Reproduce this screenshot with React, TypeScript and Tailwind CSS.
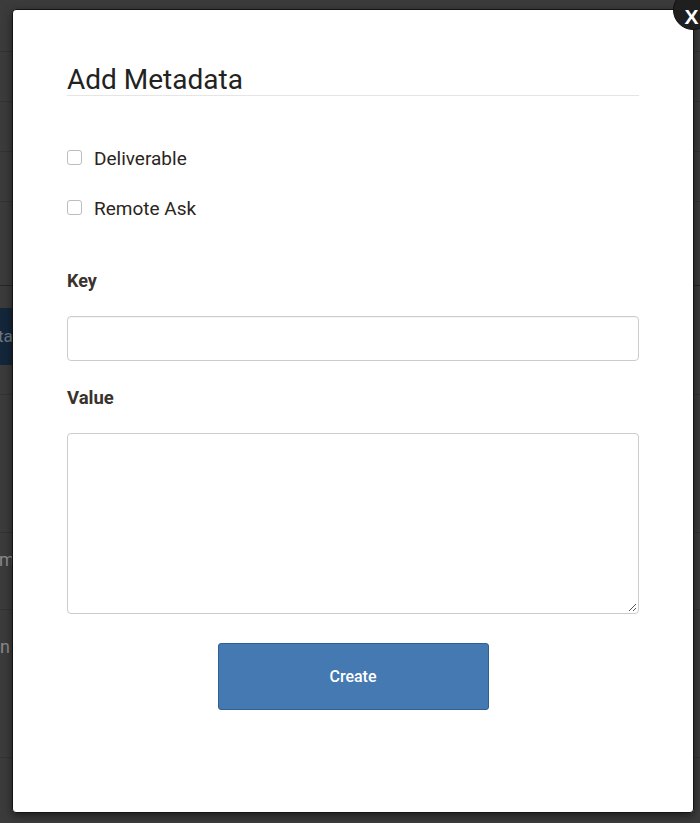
import React from "react";

const font = { fontFamily: "Roboto, 'Noto Sans', Arial, sans-serif" };

function BgRow({ h, children, dark }: { h: string; children?: React.ReactNode; dark?: boolean }) {
  return (
    <div className={`${h} border-b ${dark ? "border-[#262626]" : "border-[#333333]"} flex items-center`}>
      {children}
    </div>
  );
}

export default function App() {
  return (
    <div className="relative w-[700px] h-[823px] overflow-hidden bg-[#3b3b3b]" style={font}>
      {/* page behind the overlay */}
      <div className="flex flex-col">
        <BgRow h="h-[52px]" />
        <BgRow h="h-[50px]" />
        <BgRow h="h-[50px]" />
        <BgRow h="h-[50px]" />
        <BgRow h="h-[84px]" dark />
        <div className="h-[109px] border-b border-[#333333] pt-[22px]">
          <div className="h-[57px] w-[120px] bg-[#14263a] flex items-center text-[17px] text-[#6d7784]">
            <span className="-ml-[2px]">ta</span>
          </div>
        </div>
        <BgRow h="h-[138px]" />
        <div className="h-[77px] border-b border-[#333333] pt-[15px] text-[18px] leading-[24px] text-[#8a8a8a]">
          <span className="-ml-[1px]">m</span>
        </div>
        <div className="h-[148px] border-b border-[#333333] pt-[25px] text-[18px] leading-[24px] text-[#8a8a8a]">
          <span>n</span>
        </div>
      </div>

      {/* modal */}
      <div className="absolute left-[12px] top-[9px] w-[682px] h-[804px] bg-white rounded-[4px] border border-[#141414] shadow-[0_3px_9px_rgba(0,0,0,0.5)] px-[54px] flex flex-col">
        <h2 className="mt-[54px] text-[28px] leading-[31px] text-[#222222] border-b border-[#e5e5e5] font-normal">
          Add Metadata
        </h2>

        <label className="mt-[51px] flex items-start gap-[12px] text-[19px] leading-[24px] text-[#2b2522]">
          <span className="mt-[3px] w-[15px] h-[15px] rounded-[3px] border border-[#bdbdbd] bg-white shrink-0" />
          Deliverable
        </label>
        <label className="mt-[26px] flex items-start gap-[12px] text-[19px] leading-[24px] text-[#2b2522]">
          <span className="mt-[3px] w-[15px] h-[15px] rounded-[3px] border border-[#bdbdbd] bg-white shrink-0" />
          Remote Ask
        </label>

        <div className="mt-[48px] text-[18px] leading-[24px] font-bold text-[#3a322d]">Key</div>
        <div className="mt-[23px] h-[45px] w-full rounded-[4px] border border-[#cccccc] shadow-[inset_0_1px_1px_rgba(0,0,0,0.04)]" />

        <div className="mt-[25px] text-[18.5px] leading-[24px] font-bold text-[#3a322d]">Value</div>
        <div className="relative mt-[23px] h-[181px] w-full rounded-[4px] border border-[#cccccc]">
          <svg className="absolute right-[1px] bottom-[1px]" width="10" height="10" viewBox="0 0 10 10">
            <line x1="9" y1="2" x2="2" y2="9" stroke="#555" strokeWidth="1" />
            <line x1="9" y1="6" x2="6" y2="9" stroke="#555" strokeWidth="1" />
          </svg>
        </div>

        <div className="mt-[29px] flex justify-center">
          <button className="w-[271px] h-[67px] rounded-[3px] bg-[#4579b2] border border-[#2e5f96] text-white text-[16px] font-medium">
            Create
          </button>
        </div>
      </div>

      {/* close button */}
      <div className="absolute left-[673px] top-[-10px] w-[40px] h-[40px] rounded-full bg-[#1f1f1f] border border-[#111] flex items-center justify-center">
        <span className="text-white font-bold text-[21px] leading-none mt-[12px] mr-[3px]" style={{ fontFamily: "'Liberation Sans', Arial, sans-serif" }}>
          X
        </span>
      </div>
    </div>
  );
}
